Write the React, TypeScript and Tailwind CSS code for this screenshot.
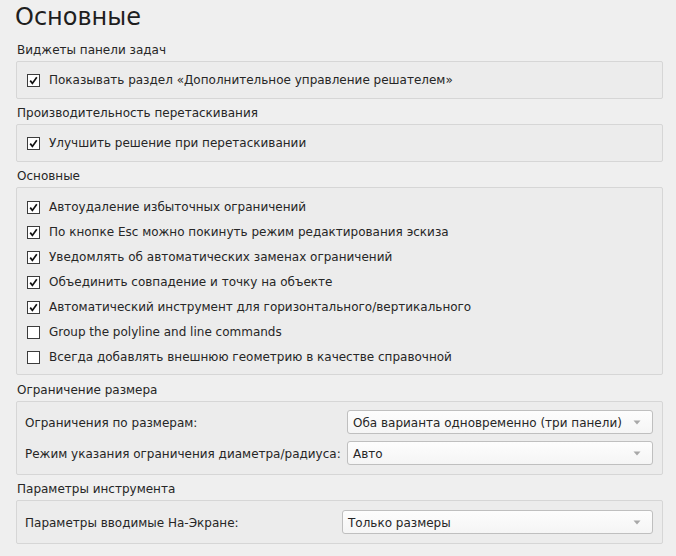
import React from "react";

const font = { fontFamily: '"DejaVu Sans", "Noto Sans", sans-serif' };

function Check({ checked, label }: { checked: boolean; label: string }) {
  return (
    <div className="flex h-[25px] items-center pl-[10px] pt-[1px]">
      <div className="flex h-[13px] w-[13px] shrink-0 items-center justify-center border border-[#3c3c3c] bg-white">
        {checked && (
          <svg width="11" height="11" viewBox="0 0 11 11">
            <polyline points="2.2,5.6 4.4,8.4 8.8,2.2" fill="none" stroke="#111" strokeWidth="1.7" />
          </svg>
        )}
      </div>
      <span className="ml-[9px] whitespace-nowrap text-[12px] text-[#262626]">{label}</span>
    </div>
  );
}

function Combo({ value, width }: { value: string; width: number }) {
  return (
    <div
      className="flex h-[24px] shrink-0 items-center justify-between rounded-[3px] border border-[#bfbfbf] bg-gradient-to-b from-[#fdfdfd] to-[#f5f5f5] pl-[5px] pr-[11px]"
      style={{ width }}
    >
      <span className="whitespace-nowrap pt-[1px] text-[12px] text-[#262626]">{value}</span>
      <svg width="8" height="5" viewBox="0 0 8 5">
        <polygon points="0.5,0.5 7.5,0.5 4,4.5" fill="#a8a8a8" />
      </svg>
    </div>
  );
}

function Label({ text, h }: { text: string; h: number }) {
  return (
    <div className="flex items-center whitespace-nowrap pl-[1px] pt-[3px] text-[12px] text-[#262626]" style={{ height: h }}>
      {text}
    </div>
  );
}

const box = "w-[647px] rounded-[2px] border border-[#d6d6d6] bg-[#ececec]";

export default function App() {
  return (
    <div className="h-[556px] w-[676px] overflow-hidden bg-[#efefef] pl-[16px]" style={font}>
      <div className="flex h-[36px] items-center text-[24px] leading-none text-[#1e1e1e]">
        <span className="ml-[-1px] mt-[-3px]">Основные</span>
      </div>
      <Label text="Виджеты панели задач" h={25} />
      <div className={`${box} py-[5px] pb-[6px]`}>
        <Check checked label="Показывать раздел «Дополнительное управление решателем»" />
      </div>
      <Label text="Производительность перетаскивания" h={25} />
      <div className={`${box} py-[5px] pb-[6px]`}>
        <Check checked label="Улучшить решение при перетаскивании" />
      </div>
      <Label text="Основные" h={25} />
      <div className={`${box} pb-[5px] pt-[6px]`}>
        <Check checked label="Автоудаление избыточных ограничений" />
        <Check checked label="По кнопке Esc можно покинуть режим редактирования эскиза" />
        <Check checked label="Уведомлять об автоматических заменах ограничений" />
        <Check checked label="Объединить совпадение и точку на объекте" />
        <Check checked label="Автоматический инструмент для горизонтального/вертикального" />
        <Check checked={false} label="Group the polyline and line commands" />
        <Check checked={false} label="Всегда добавлять внешнюю геометрию в качестве справочной" />
      </div>
      <Label text="Ограничение размера" h={26} />
      <div className={`${box} flex flex-col gap-[7px] pb-[9px] pl-[8px] pt-[8px]`}>
        <div className="flex items-center justify-between pr-[9px]">
          <span className="whitespace-nowrap pt-[1px] text-[12px] text-[#262626]">Ограничения по размерам:</span>
          <Combo value="Оба варианта одновременно (три панели)" width={306} />
        </div>
        <div className="flex items-center justify-between pr-[9px]">
          <span className="whitespace-nowrap pt-[1px] text-[12px] text-[#262626]">Режим указания ограничения диаметра/радиуса:</span>
          <Combo value="Авто" width={306} />
        </div>
      </div>
      <Label text="Параметры инструмента" h={25} />
      <div className={`${box} flex flex-col pb-[9px] pl-[8px] pt-[9px]`}>
        <div className="flex items-center justify-between pr-[9px]">
          <span className="whitespace-nowrap pt-[1px] text-[12px] text-[#262626]">Параметры вводимые На-Экране:</span>
          <Combo value="Только размеры" width={311} />
        </div>
      </div>
    </div>
  );
}
